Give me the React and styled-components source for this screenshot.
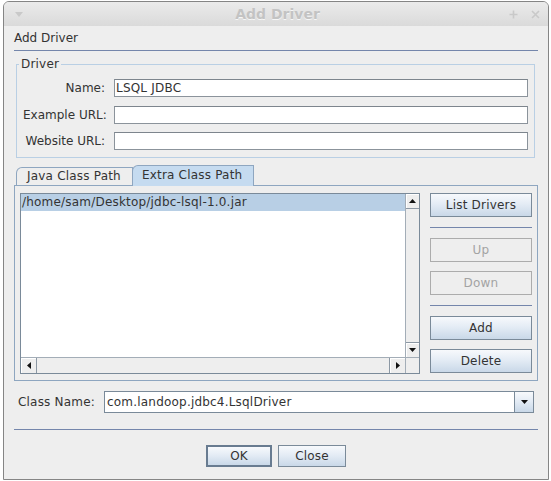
import React from "react";
import styled, { createGlobalStyle, css } from "styled-components";

const GlobalStyle = createGlobalStyle`
  html, body {
    margin: 0;
    padding: 0;
    background: #ffffff;
  }
  body {
    font-family: "DejaVu Sans", "Liberation Sans", sans-serif;
    font-size: 12px;
    letter-spacing: 0.2px;
    color: #333333;
  }
  * {
    box-sizing: border-box;
  }
`;

const TriangleDown = ({ color = "#111" }) => (
  <svg width="7" height="4" viewBox="0 0 7 4">
    <polygon points="0,0 7,0 3.5,4" fill={color} />
  </svg>
);

const TriangleUp = () => (
  <svg width="7" height="4" viewBox="0 0 7 4">
    <polygon points="0,4 7,4 3.5,0" fill="#111" />
  </svg>
);

const TriangleLeft = () => (
  <svg width="4" height="7" viewBox="0 0 4 7">
    <polygon points="4,0 4,7 0,3.5" fill="#111" />
  </svg>
);

const TriangleRight = () => (
  <svg width="4" height="7" viewBox="0 0 4 7">
    <polygon points="0,0 0,7 4,3.5" fill="#111" />
  </svg>
);

function App() {
  return (
    <>
      <GlobalStyle />
      <Window>
        <TitleBar>
          <TitleLeft>
            <svg width="8" height="5" viewBox="0 0 8 5">
              <polygon points="0,0 8,0 4,5" fill="#c9c9c9" />
            </svg>
          </TitleLeft>
          <TitleText>Add Driver</TitleText>
          <TitleRight>
            <svg width="9" height="9" viewBox="0 0 9 9">
              <path d="M4.5 0.5 V8.5 M0.5 4.5 H8.5" stroke="#c9c9c9" strokeWidth="1.6" />
            </svg>
            <svg width="9" height="9" viewBox="0 0 9 9">
              <path d="M1 1 L8 8 M8 1 L1 8" stroke="#c9c9c9" strokeWidth="1.6" />
            </svg>
          </TitleRight>
        </TitleBar>

        <Body>
          <Heading>Add Driver</Heading>
          <Separator />

          <Group>
            <Legend>Driver</Legend>
            <FormGrid>
              <FieldLabel>Name:</FieldLabel>
              <TextField>LSQL JDBC</TextField>
              <FieldLabel>Example URL:</FieldLabel>
              <TextField />
              <FieldLabel>Website URL:</FieldLabel>
              <TextField />
            </FormGrid>
          </Group>

          <TabRow>
            <Tab>Java Class Path</Tab>
            <Tab $selected>Extra Class Path</Tab>
          </TabRow>
          <TabPanel>
            <ScrollPane>
              <ListArea>
                <ListRow $selected>/home/sam/Desktop/jdbc-lsql-1.0.jar</ListRow>
              </ListArea>
              <VScroll>
                <ArrowButton $side="top">
                  <TriangleUp />
                </ArrowButton>
                <ArrowButton $side="bottom">
                  <TriangleDown />
                </ArrowButton>
              </VScroll>
              <HScroll>
                <ArrowButton $side="left">
                  <TriangleLeft />
                </ArrowButton>
                <ArrowButton $side="right">
                  <TriangleRight />
                </ArrowButton>
              </HScroll>
              <Corner />
            </ScrollPane>

            <ButtonColumn>
              <Button>List Drivers</Button>
              <ColumnSeparator />
              <Button disabled>Up</Button>
              <Button disabled>Down</Button>
              <ColumnSeparator />
              <Button>Add</Button>
              <Button>Delete</Button>
            </ButtonColumn>
          </TabPanel>

          <ClassRow>
            <span>Class Name:</span>
            <Combo>
              <ComboText>com.landoop.jdbc4.LsqlDriver</ComboText>
              <ComboButton>
                <TriangleDown />
              </ComboButton>
            </Combo>
          </ClassRow>

          <Separator $top={16} />

          <Footer>
            <FooterButton $default $width={66}>OK</FooterButton>
            <FooterButton $width={68}>Close</FooterButton>
          </Footer>
        </Body>
      </Window>
    </>
  );
}

export default App;


const Window = styled.div`
  margin: 1px 0 0 3px;
  width: 546px;
  height: 479px;
  border: 1px solid #858585;
  border-radius: 6px 6px 0 0;
  background: #eeeeee;
  display: flex;
  flex-direction: column;
  overflow: hidden;
`;

const TitleBar = styled.div`
  height: 24px;
  flex-shrink: 0;
  display: grid;
  grid-template-columns: 1fr auto 1fr;
  align-items: center;
  padding: 0 8px 0 11px;
  background: linear-gradient(#ebebeb, #dadada);
`;

const TitleLeft = styled.div`
  display: flex;
  align-items: center;
`;

const TitleText = styled.div`
  font-weight: bold;
  font-size: 14px;
  letter-spacing: 0;
  color: #c3c3c3;
  text-shadow: 0 1px 0 #f6f6f6;
`;

const TitleRight = styled.div`
  display: flex;
  justify-content: flex-end;
  align-items: center;
  gap: 13px;
`;

const Body = styled.div`
  flex: 1;
  display: flex;
  flex-direction: column;
  padding: 0 10px;
`;

const Heading = styled.div`
  height: 24px;
  line-height: 24px;
  letter-spacing: 0;
`;

const Separator = styled.div`
  height: 1px;
  flex-shrink: 0;
  background: #7486ab;
  margin-top: ${(p) => (p.$top ? `${p.$top}px` : "0")};
`;

const Group = styled.fieldset`
  margin: 6px 3px 0 2px;
  padding: 0 6px 7px 6px;
  border: 1px solid #b9cfe4;
  min-width: 0;
`;

const Legend = styled.legend`
  margin-left: -4px;
  padding: 0 2px;
  line-height: 14px;
`;

const FormGrid = styled.div`
  display: grid;
  grid-template-columns: 82px 1fr;
  column-gap: 9px;
  row-gap: 8.5px;
  align-items: center;
  margin-top: 8px;
`;

const FieldLabel = styled.span`
  text-align: right;
  white-space: nowrap;
  letter-spacing: 0;
`;

const TextField = styled.div`
  height: 18px;
  line-height: 16px;
  padding: 0 1px;
  background: #ffffff;
  border: 1px solid #8b939b;
  border-top-color: #7d858d;
`;

const TabRow = styled.div`
  display: flex;
  align-items: flex-end;
  height: 20px;
  margin-top: 7px;
  padding-left: 2px;
  position: relative;
  z-index: 1;
`;

const Tab = styled.div`
  height: ${(p) => (p.$selected ? "21px" : "18px")};
  margin-bottom: ${(p) => (p.$selected ? "-1px" : "0")};
  padding: 0 11px 0 10px;
  line-height: ${(p) => (p.$selected ? "19px" : "17px")};
  border: 1px solid #8ea6c0;
  border-bottom: none;
  border-top-left-radius: 6px;
  background: ${(p) => (p.$selected ? "#c5dbf0" : "#eeeeee")};
  white-space: nowrap;
  ${(p) =>
    p.$selected &&
    css`
      margin-left: -1px;
      padding-left: 9px;
    `}
`;

const TabPanel = styled.div`
  height: 196px;
  flex-shrink: 0;
  display: flex;
  gap: 10px;
  padding: 7px 5px 6px 5px;
  border: 1px solid #8ea6c0;
  background: #eeeeee;
`;

const ScrollPane = styled.div`
  flex: 1;
  height: 181px;
  display: grid;
  grid-template-columns: 1fr 14px;
  grid-template-rows: 1fr 16px;
  border: 1px solid #7a8a99;
  background: #ffffff;
`;

const ListArea = styled.div`
  background: #ffffff;
`;

const ListRow = styled.div`
  height: 17px;
  line-height: 17px;
  padding-left: 1px;
  background: ${(p) => (p.$selected ? "#b8cfe5" : "transparent")};
`;

const VScroll = styled.div`
  display: flex;
  flex-direction: column;
  justify-content: space-between;
  background: #eeeeee;
  border-left: 1px solid #a3adb7;
`;

const HScroll = styled.div`
  display: flex;
  justify-content: space-between;
  background: #eeeeee;
  border-top: 1px solid #a3adb7;
`;

const Corner = styled.div`
  background: #eeeeee;
  border-top: 1px solid #a3adb7;
  border-left: 1px solid #a3adb7;
`;

const ArrowButton = styled.div`
  display: flex;
  align-items: center;
  justify-content: center;
  background: #eeeeee;
  box-shadow: inset 1px 1px 0 #ffffff;
  ${(p) =>
    p.$side === "top" || p.$side === "bottom"
      ? css`
          height: 15px;
          border-${p.$side === "top" ? "bottom" : "top"}: 1px solid #8c98a4;
        `
      : css`
          width: 16px;
          border-${p.$side === "left" ? "right" : "left"}: 1px solid #8c98a4;
        `}
`;

const ButtonColumn = styled.div`
  width: 102px;
  flex-shrink: 0;
  display: flex;
  flex-direction: column;
  gap: 9px;
`;

const ColumnSeparator = styled.div`
  height: 1px;
  margin: 1px 0;
  background: #7486ab;
`;

const buttonLook = css`
  font-family: "DejaVu Sans", "Liberation Sans", sans-serif;
  font-size: 12px;
  letter-spacing: 0.2px;
  color: #333333;
  border: 1px solid #7a8a99;
  background: linear-gradient(#f7f9fc 0%, #e4ecf5 45%, #c9d8e8 100%);
  padding: 0;

  &:disabled {
    color: #a3a3a3;
    border-color: #acacac;
    background: #eeeeee;
  }
`;

const Button = styled.button`
  ${buttonLook}
  height: 24px;
`;

const ClassRow = styled.div`
  display: flex;
  align-items: center;
  gap: 9px;
  margin-top: 10px;
  padding: 0 4px;
`;

const Combo = styled.div`
  flex: 1;
  height: 22px;
  display: flex;
  border: 1px solid #7a8a99;
  background: #ffffff;
`;

const ComboText = styled.div`
  flex: 1;
  line-height: 20px;
  padding-left: 2px;
`;

const ComboButton = styled.div`
  width: 19px;
  display: flex;
  align-items: center;
  justify-content: center;
  border-left: 1px solid #7a8a99;
  background: linear-gradient(#f7f9fc 0%, #e4ecf5 45%, #c9d8e8 100%);
`;

const Footer = styled.div`
  display: flex;
  justify-content: center;
  gap: 6px;
  margin-top: 15px;
`;

const FooterButton = styled.button`
  ${buttonLook}
  height: 22px;
  width: ${(p) => p.$width}px;
  ${(p) =>
    p.$default &&
    css`
      border: 2px solid #687b90;
    `}
`;
